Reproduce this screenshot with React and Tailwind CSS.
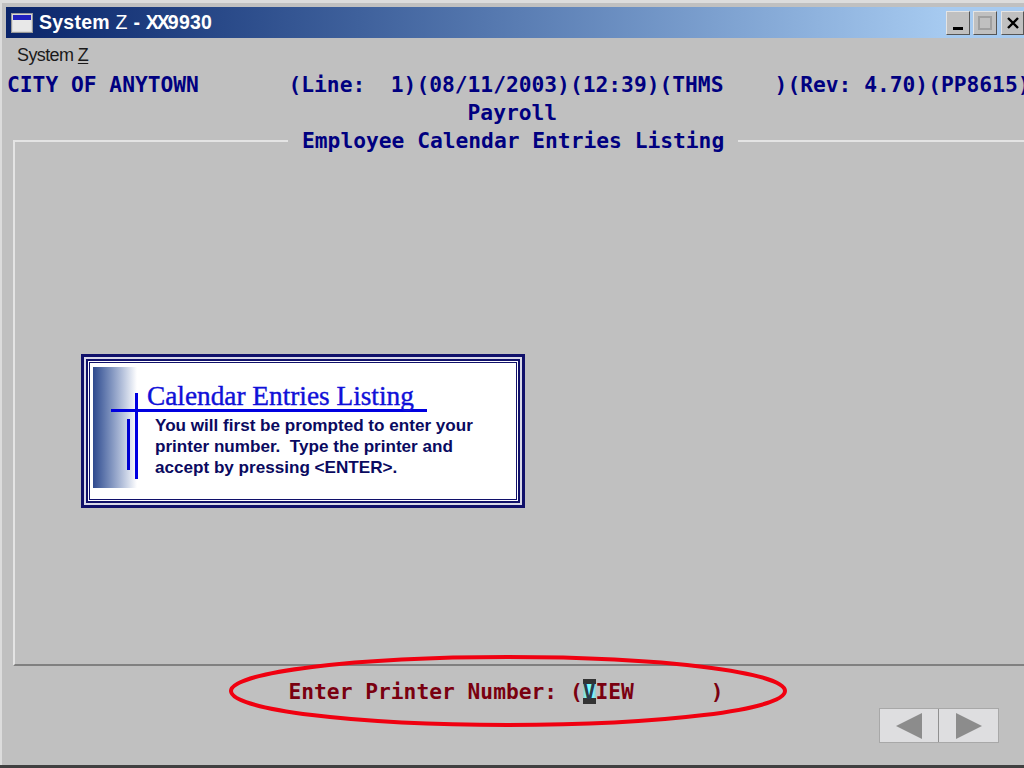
const mono = "font-['DejaVu_Sans_Mono',monospace] font-bold text-[21.26px] leading-[28px] whitespace-pre";

function WinButton({ children, className = '' }) {
  return (
    <div className={`h-[24px] bg-[#c0c0c0] border border-t-[#e4e4e4] border-l-[#e4e4e4] border-r-[#555] border-b-[#555] flex items-center justify-center ${className}`}>
      {children}
    </div>
  );
}

function TitleBar() {
  return (
    <div className="h-[31px] ml-[6px] mt-[7px] flex items-center bg-gradient-to-r from-[#0a246a] from-0% to-[#a6caf0] to-92%">
      <svg width="22" height="20" viewBox="0 0 22 20" className="ml-[5px] shrink-0">
        <rect x="0.5" y="0.5" width="21" height="19" fill="#d8d8d8" stroke="#9a9a9a" />
        <rect x="2" y="2" width="18" height="5" fill="#2020c0" />
        <rect x="2" y="7" width="18" height="11" fill="#e8e8e8" />
      </svg>
      <span className="ml-[6px] text-white font-bold text-[19.5px] tracking-[0.25px] leading-none whitespace-pre font-['Liberation_Sans',sans-serif]">
        System <span className="font-normal">Z</span> - <span className="tracking-[-2px]">XX</span>9930
      </span>
      <div className="ml-auto flex items-center">
        <WinButton className="w-[24px] mr-[3px]">
          <div className="w-[10px] h-[3px] bg-black mt-[11px]" />
        </WinButton>
        <WinButton className="w-[24px] mr-[4px]">
          <div className="w-[14px] h-[14px] border-2 border-[#a0a0a0]" />
        </WinButton>
        <WinButton className="w-[23px]">
          <svg width="14" height="14" viewBox="0 0 14 14">
            <path d="M2 2 L12 12 M12 2 L2 12" stroke="#000" strokeWidth="2.4" />
          </svg>
        </WinButton>
      </div>
    </div>
  );
}

function GroupBox() {
  return (
    <div className="ml-[13px] h-[539px] flex flex-col">
      <div className="flex items-center h-[28px]">
        <div className="w-[275px] h-[2px] bg-[#e4e4e4]" />
        <div className={`${mono} text-[#000080] ml-[14px]`}>Employee Calendar Entries Listing</div>
        <div className="flex-1 h-[2px] bg-[#e4e4e4] ml-[14px]" />
      </div>
      <div className="flex-1 -mt-[13px] border-l-2 border-l-[#e4e4e4] border-b-2 border-b-[#808080]" />
    </div>
  );
}

function Callout() {
  return (
    <div className="absolute left-[81px] top-[354px] w-[444px] h-[154px] border-[3px] border-[#10106a] p-[2px] bg-[#d8d8e8]">
      <div className="w-full h-full border-[2px] border-[#10106a] p-[1px] bg-white">
        <div className="w-full h-full border border-[#10106a] bg-white relative font-['Liberation_Sans',sans-serif]">
          <div className="absolute left-[3px] top-[4px] w-[44px] h-[121px] bg-gradient-to-r from-[#2f4a8e] to-white" />
          <div className="absolute left-[21px] top-[46px] w-[316px] h-[3px] bg-[#0000e0]" />
          <div className="absolute left-[45px] top-[30px] w-[3px] h-[86px] bg-[#0000e0]" />
          <div className="absolute left-[37px] top-[56px] w-[3px] h-[51px] bg-[#0000d0]" />
          <div className="absolute left-[57px] top-[18px] text-[27.3px] leading-[30px] text-[#1010d8] [-webkit-text-stroke:0.4px_#1010d8] font-['Liberation_Serif',serif] whitespace-pre">Calendar Entries Listing</div>
          <div className="absolute left-[65px] top-[52px] text-[17.1px] leading-[21px] font-bold text-[#0a0a60] whitespace-pre">
            {'You will first be prompted to enter your\nprinter number.  Type the printer and\naccept by pressing <ENTER>.'}
          </div>
        </div>
      </div>
    </div>
  );
}

export default function App() {
  return (
    <div className="relative w-[1024px] h-[768px] overflow-hidden bg-[#c0c0c0] flex flex-col">
      <div className="absolute inset-x-0 top-0 h-[3px] bg-[#dcdcdc]" />
      <div className="absolute left-0 top-0 bottom-0 w-[2px] bg-[#dcdcdc]" />
      <TitleBar />
      <div className="h-[33px] pl-[17px] pt-[2px] flex items-center text-[18px] text-[#1a1a1a] font-['Liberation_Sans',sans-serif] tracking-[-0.6px]">
        System&nbsp;<span className="underline underline-offset-2">Z</span>
      </div>
      <div className={`${mono} pl-[7px] text-[#000080]`}>{'CITY OF ANYTOWN       (Line:  1)(08/11/2003)(12:39)(THMS    )(Rev: 4.70)(PP8615)'}</div>
      <div className={`${mono} pl-[7px] text-[#000080]`}>{'                                    Payroll'}</div>
      <GroupBox />
      <div className={`${mono} pl-[7px] text-[#7a0010] mt-[12px]`}>
        {'                      Enter Printer Number: ('}
        <span className="text-[#2a3a4a] bg-[linear-gradient(#333_0%,#333_22%,transparent_22%,transparent_75%,#333_75%),linear-gradient(90deg,#a0c8c8_0%,#7ff_25%,#7ff_75%,#a0c8c8_100%)]">V</span>
        {'IEW      )'}
      </div>

      <Callout />

      <svg className="absolute left-[228px] top-[654px]" width="560" height="74" viewBox="0 0 560 74">
        <ellipse cx="280" cy="37" rx="277" ry="34" fill="none" stroke="#f00010" strokeWidth="4" />
      </svg>

      <div className="absolute left-[879px] top-[708px] w-[120px] h-[35px] flex bg-[#dedee0] border border-[#a8a8a8]">
        <div className="w-[59px] border-r border-[#909090] flex items-center justify-center">
          <svg width="28" height="28" viewBox="0 0 28 28"><path d="M1 14 L27 1 L27 27 Z" fill="#8c8c8c" /></svg>
        </div>
        <div className="flex-1 flex items-center justify-center">
          <svg width="28" height="28" viewBox="0 0 28 28"><path d="M27 14 L1 1 L1 27 Z" fill="#8c8c8c" /></svg>
        </div>
      </div>

      <div className="absolute inset-x-0 bottom-0 h-[3px] bg-[#404040]" />
    </div>
  );
}
